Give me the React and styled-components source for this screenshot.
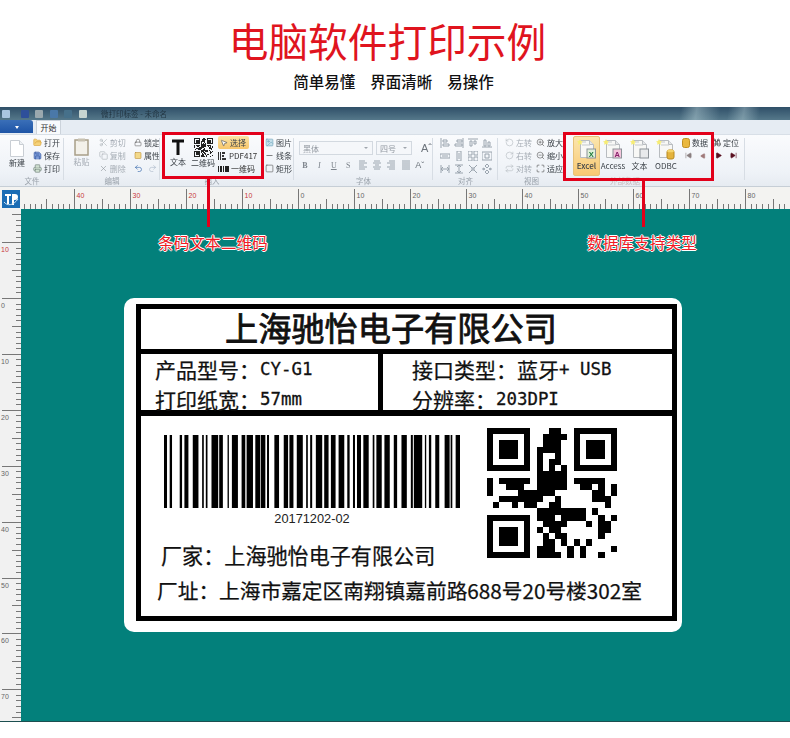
import React from "react";
import styled, { createGlobalStyle } from "styled-components";
import { Scissors, Copy, X, Undo2, Redo2, ZoomIn, ZoomOut, Maximize, Lock, FolderOpen, Save, Printer, Image, Minus, Square, RotateCcw, RotateCw, Repeat, MousePointer2, Binoculars, SkipBack, SkipForward, Play } from "lucide-react";

const CJK = `"Noto Sans CJK SC", "Liberation Sans", sans-serif`;

const GlobalStyle = createGlobalStyle`
  html, body { margin: 0; padding: 0; background: #fff; }
  body { width: 790px; height: 738px; overflow: hidden; font-family: ${CJK}; }
`;

const Page = styled.div`
  width: 790px;
  height: 738px;
  display: flex;
  flex-direction: column;
`;

const Heading = styled.header`
  height: 107px;
  box-sizing: border-box;
  padding-top: 16px;
  text-align: center;
`;

const Title = styled.h1`
  margin: 0;
  padding-right: 15px;
  font-size: 39.7px;
  line-height: 48px;
  font-weight: 400;
  color: #e0141e;
`;

const Subtitle = styled.div`
  margin-top: 6px;
  padding-right: 3px;
  display: flex;
  justify-content: center;
  gap: 15px;
  font-size: 15.5px;
  line-height: 22px;
  font-weight: 500;
  color: #111;
`;

const Window = styled.section`
  position: relative;
  height: 614px;
  display: flex;
  flex-direction: column;
  border-bottom: 1px solid #1c4f50;
`;

const TitleBar = styled.div`
  height: 13px;
  flex: none;
  display: flex;
  align-items: center;
  gap: 6.5px;
  padding-left: 2px;
  filter: blur(0.4px);
  background:
    linear-gradient(100deg, transparent 86%, rgba(190, 215, 220, 0.45) 88%, transparent 91%, transparent 92%, rgba(190, 215, 220, 0.4) 94%, transparent 96%),
    linear-gradient(180deg, #2f4f68, #55788a);
`;

const TitleText = styled.span`
  margin-left: 8px;
  font-size: 7.5px;
  line-height: 13px;
  color: #16242e;
  opacity: 0.75;
`;

const TitleGlyph = styled.i`
  width: 8px;
  height: 8px;
  flex: none;
  border-radius: 1px;
  margin-right: ${(p) => p.$after || 0}px;
  background: ${(p) => p.$c};
`;

const TabRow = styled.div`
  height: 14px;
  flex: none;
  display: flex;
  background: #e6ecf3;
`;

const FileButton = styled.div`
  width: 33px;
  height: 13px;
  display: flex;
  align-items: center;
  justify-content: center;
  background: linear-gradient(180deg, #3a6fb8, #1e54a6);
  border-radius: 0 3px 0 0;
  &::after {
    content: "";
    border: 2.5px solid transparent;
    border-top: 3px solid #fff;
    margin-top: 3px;
  }
`;

const Tab = styled.div`
  margin-left: 3px;
  width: 25px;
  height: 14px;
  background: #f8fafc;
  border: 1px solid #ccd3db;
  border-bottom: none;
  box-sizing: border-box;
  font-size: 8px;
  line-height: 13px;
  text-align: center;
  color: #333;
`;

const Ribbon = styled.div`
  height: 53px;
  flex: none;
  display: flex;
  box-sizing: border-box;
  border-top: 1px solid #d8dfe7;
  border-bottom: 1px solid #c6ced6;
  filter: blur(0.3px);
  background: linear-gradient(180deg, #fafbfd, #eef2f7 75%, #e6ebf1);
`;

const Group = styled.div`
  width: ${(p) => p.$w}px;
  flex: none;
  box-sizing: border-box;
  display: flex;
  flex-direction: column;
  position: relative;
  &::after {
    content: "";
    position: absolute;
    right: 0;
    top: 3px;
    bottom: 6px;
    width: 1px;
    background: ${(p) => (p.$plain ? "transparent" : "#d7dde4")};
  }
`;

const GroupBody = styled.div`
  height: 41px;
  display: flex;
  padding: 1px 0 0 ${(p) => p.$pad || 0}px;
  gap: ${(p) => p.$gap || 0}px;
`;

const GroupCaption = styled.div`
  font-size: 7.5px;
  line-height: 10px;
  text-align: center;
  color: #9aa2ab;
`;

const Stack = styled.div`
  display: flex;
  flex-direction: column;
  width: ${(p) => p.$w}px;
  margin-left: ${(p) => p.$left || 0}px;
`;

const Item = styled.div`
  height: 13px;
  display: flex;
  align-items: center;
  gap: 2px;
  font-size: 8px;
  white-space: nowrap;
  color: ${(p) => (p.$off ? "#a6adb5" : "#3c4248")};
`;

const StrongItem = styled(Item)`
  color: #333;
`;

const Selected = styled(Item)`
  width: 31px;
  height: 13px;
  padding-left: 2px;
  box-sizing: border-box;
  border-radius: 2px;
  background: linear-gradient(180deg, #fbe3a4, #f7c66b);
`;

const BigButton = styled.div`
  width: ${(p) => p.$w}px;
  height: 40px;
  box-sizing: border-box;
  padding-top: ${(p) => p.$top ?? 4}px;
  display: flex;
  flex-direction: column;
  align-items: center;
  font-size: 8px;
  line-height: 11px;
  white-space: nowrap;
  color: ${(p) => (p.$off ? "#a6adb5" : "#3c4248")};
  border-radius: 2px;
  ${(p) => p.$active && "background: linear-gradient(180deg, #fbe6ae, #f8c873); border: 1px solid #e6c27a; font-weight: 500;"}
`;

const FontColumn = styled.div`
  display: flex;
  flex-direction: column;
  gap: 3px;
  padding: 5px 0 0 6px;
`;

const FontRow = styled.div`
  display: flex;
  align-items: center;
  gap: ${(p) => p.$gap || 3}px;
  height: 14px;
`;

const SelectBox = styled.div`
  width: ${(p) => p.$w}px;
  height: 14px;
  box-sizing: border-box;
  display: flex;
  align-items: center;
  justify-content: space-between;
  padding: 0 4px 0 3px;
  background: #f5f7fa;
  border: 1px solid #d3d9e0;
  font-size: 8px;
  color: #9298a0;
  &::after {
    content: "";
    border: 2px solid transparent;
    border-top: 2px solid #a0a6ad;
    margin-top: 2px;
  }
`;

const FontGlyph = styled.span`
  width: 10px;
  text-align: center;
  font: ${(p) => (p.$bold ? "700" : "400")} 8px "Liberation Serif", serif;
  font-style: ${(p) => (p.$italic ? "italic" : "normal")};
  text-decoration: ${(p) => (p.$line ? "underline" : "none")};
  color: #7c838b;
`;

const GrowGlyph = styled.span`
  margin-left: ${(p) => p.$left}px;
  font: 400 ${(p) => p.$size}px "Liberation Sans", sans-serif;
  color: #6c737b;
`;

const AlignIcon = styled.svg`
  display: block;
  width: 10px;
  height: 10px;
  flex: none;
`;

const AlignGrid = styled.div`
  display: grid;
  grid-template-columns: repeat(4, 10px);
  grid-auto-rows: 13px;
  column-gap: 4px;
  padding: 0 0 0 7px;
  align-items: center;
  justify-items: center;
`;

const NavRow = styled.div`
  display: flex;
  align-items: center;
  gap: 8px;
  height: 13px;
  padding-left: 3px;
`;

const Rulers = styled.div`
  flex: 1;
  min-height: 0;
  display: grid;
  grid-template-columns: 21px 1fr;
  grid-template-rows: 22px 1fr;
`;

const RulerCorner = styled.div`
  background: #f3f3f1;
  padding: 3px 0 0 2px;
`;

const LogoBox = styled.div`
  width: 18px;
  height: 18px;
  background: #1b6db5;
  display: flex;
  align-items: center;
  justify-content: center;
`;

const HorizontalRuler = styled.svg`
  display: block;
  width: 769px;
  height: 22px;
  background: #f3f3f1;
`;

const VerticalRuler = styled.svg`
  display: block;
  width: 21px;
  height: 512px;
  background: #f1f1f1;
`;

const Canvas = styled.div`
  background: #03807b;
  padding: 89px 0 0 103px;
`;

const Card = styled.div`
  width: 558px;
  height: 334px;
  box-sizing: border-box;
  padding: 6px 5px 11px 12px;
  background: #fff;
  border-radius: 10px;
`;

const Frame = styled.div`
  height: 100%;
  box-sizing: border-box;
  border: 5px solid #000;
  display: flex;
  flex-direction: column;
  color: #111;
`;

const CompanyRow = styled.div`
  height: 40px;
  flex: none;
  padding-left: 84px;
  font-size: 33.2px;
  line-height: 35px;
  font-weight: 400;
  -webkit-text-stroke: 0.8px #111;
  white-space: nowrap;
  border-bottom: 5px solid #000;
`;

const SpecRow = styled.div`
  height: 56px;
  flex: none;
  display: flex;
  border-bottom: 6px solid #000;
`;

const SpecCell = styled.div`
  width: ${(p) => p.$w}px;
  flex: none;
  box-sizing: border-box;
  padding-left: ${(p) => p.$pad}px;
  ${(p) => p.$divider && "border-right: 5px solid #000;"}
`;

const SpecLine = styled.div`
  height: 30px;
  display: flex;
  align-items: center;
  font-size: 21px;
  font-weight: 400;
  -webkit-text-stroke: 0.25px #111;
  white-space: pre;
`;

const Mono = styled.span`
  font-family: "DejaVu Sans Mono", "Liberation Mono", monospace;
  font-size: 17.4px;
  -webkit-text-stroke: 0.3px #111;
`;

const LowerPart = styled.div`
  flex: 1;
  display: flex;
  flex-direction: column;
`;

const CodesRow = styled.div`
  display: flex;
`;

const BarcodeColumn = styled.div`
  width: 346px;
  flex: none;
  padding: 19px 0 0 23px;
  box-sizing: border-box;
`;

const BarcodeGraphic = styled.svg`
  display: block;
  width: 296px;
  height: 73px;
`;

const BarcodeNumber = styled.div`
  width: 296px;
  margin-top: 4px;
  font: 12.8px/14px "Liberation Sans", sans-serif;
  text-align: center;
  color: #222;
`;

const FactoryName = styled.div`
  margin: 14px 0 0 -3px;
  font-size: 21.1px;
  line-height: 30px;
  font-weight: 400;
  -webkit-text-stroke: 0.25px #111;
  white-space: nowrap;
`;

const FactoryAddress = styled.div`
  margin-top: 5px;
  padding-left: 16px;
  font-size: 20.7px;
  line-height: 30px;
  font-weight: 400;
  -webkit-text-stroke: 0.25px #111;
  white-space: nowrap;
`;

const QrCode = styled.svg`
  display: block;
  width: ${(p) => p.$size}px;
  height: ${(p) => p.$size}px;
  flex: none;
  margin-top: ${(p) => p.$top || 0}px;
`;

const CalloutBox = styled.div`
  position: absolute;
  left: ${(p) => p.$x}px;
  top: ${(p) => p.$y}px;
  width: ${(p) => p.$w}px;
  height: ${(p) => p.$h}px;
  box-sizing: border-box;
  border: 3px solid #e2001a;
`;

const CalloutStem = styled.div`
  position: absolute;
  left: ${(p) => p.$x}px;
  top: ${(p) => p.$y}px;
  width: 3px;
  height: ${(p) => p.$h}px;
  background: #e2001a;
`;

const CalloutLabel = styled.div`
  position: absolute;
  left: ${(p) => p.$x}px;
  top: 125px;
  font-size: 15.7px;
  line-height: 22px;
  white-space: nowrap;
  color: #ee1c25;
  text-shadow: 1px 0 0 #fff, -1px 0 0 #fff, 0 1px 0 #fff, 0 -1px 0 #fff;
`;

const QR_ROWS = [
  "111111100011001111111",
  "100000100111101000001",
  "101110100111001011101",
  "101110101111001011101",
  "101110101001001011101",
  "100000101011001000001",
  "111111101010101111111",
  "000000001111100000000",
  "101111101111101111100",
  "100111001111100110101",
  "100001111110000001101",
  "001111111001000001110",
  "010010110011000000010",
  "000000001111111101000",
  "111111101110111100101",
  "100000100111100010110",
  "101110101011000000110",
  "101110100101100000100",
  "101110100110101010000",
  "100000101110010100001",
  "111111101111010100100",
];

const qrPath = QR_ROWS.map((row, y) =>
  row.split("").map((c, x) => (c === "1" ? `M${x} ${y}h1v1h-1z` : "")).join("")
).join("");

// bar edges read off the label, in 1/3 px from the left of the crop
const BARS = [
  [133, 142], [150, 157], [180, 187], [194, 206], [219, 236], [247, 252], [258, 263], [275, 295],
  [298, 309], [323, 327], [336, 354], [365, 376], [380, 399], [406, 420], [422, 436], [441, 447],
  [463, 477], [491, 504], [508, 520], [530, 548], [558, 563], [570, 576], [587, 606], [612, 625],
  [632, 646], [655, 672], [681, 688], [698, 704], [710, 722], [729, 745], [757, 762], [768, 784],
  [792, 808], [820, 830], [843, 859], [871, 877], [880, 905], [913, 917], [925, 932], [944, 956],
  [972, 987], [990, 995], [1005, 1018],
];

// little alignment pictures, four to a row
const ALIGN_PATHS = [
  "M1 0v10M3 2h4v2H3zM3 6h6v2H3z",
  "M9 0v10M3 2h5v2H3zM1 6h7v2H1z",
  "M0 1h10M2 3h2v5H2zM6 3h2v3H6z",
  "M0 9h10M2 2h2v6H2zM6 4h2v4H6z",
  "M0 3h10v4H0zM2 5h6",
  "M3 0h4v10H3zM5 2v6",
  "M0 0h4v4H0zM6 0h4v4H6zM0 6h4v4H0zM6 6h4v4H6z",
  "M0 1h10v8H0zM3 3h4v4H3z",
  "M1 1v8M9 1v8M1 5h8M3 3l-2 2 2 2M7 3l2 2-2 2",
  "M1 1h8M1 9h8M5 1v8M3 3l2-2 2 2M3 7l2 2 2-2",
  "M1 1l3 3M9 1L6 4M1 9l3-3M9 9L6 6M4 4h2v2H4z",
  "M5 0l2 2-2 2-2-2zM5 6l2 2-2 2-2-2zM1 4l2 1-2 1zM9 4L7 5l2 1z",
];

const TEXT_ALIGN_PATHS = [
  "M1 1h6M1 3h8M1 5h5M1 7h8M1 9h6",
  "M2 1h6M1 3h8M3 5h4M1 7h8M2 9h6",
  "M3 1h6M1 3h8M4 5h5M1 7h8M3 9h6",
  "M1 1h8M1 3h8M1 5h8M1 7h8M1 9h8",
];

const UNIT = 5.59;
const ORIGIN = 298;

const TopRuler = () => {
  const ticks = [];
  for (let k = -49; k <= 88; k++) {
    const x = Math.round(ORIGIN + k * UNIT - 21) + 0.5;
    const from = k % 10 === 0 ? 2 : k % 5 === 0 ? 12 : 17;
    ticks.push(<line key={k} x1={x} x2={x} y1={from} y2={22} stroke="#777" />);
    if (k % 10 === 0) {
      ticks.push(
        <text key={`t${k}`} x={x + 2} y={11} fontSize="7" fontFamily="Liberation Sans" fill={k < 0 ? "#c8383c" : "#666"}>
          {Math.abs(k)}
        </text>
      );
    }
  }
  return <HorizontalRuler viewBox="0 0 769 22">{ticks}</HorizontalRuler>;
};

const LeftRuler = () => {
  const ticks = [];
  for (let k = -15; k <= 76; k++) {
    const y = Math.round(ORIGIN + k * UNIT - 209) + 0.5;
    const from = k % 10 === 0 ? 2 : k % 5 === 0 ? 12 : 16;
    ticks.push(<line key={k} x1={from} x2={21} y1={y} y2={y} stroke="#777" />);
    if (k % 10 === 0) {
      ticks.push(
        <text key={`t${k}`} x={1} y={y + 9} fontSize="7" fontFamily="Liberation Sans" fill={k < 0 ? "#c8383c" : "#666"}>
          {Math.abs(k)}
        </text>
      );
    }
  }
  return <VerticalRuler viewBox="0 0 21 512">{ticks}</VerticalRuler>;
};

const PageIcon = ({ w = 14, h = 17, stroke = "#c9ced4", fill = "#fff" }) => (
  <svg width={w} height={h} viewBox="0 0 14 17">
    <path d="M.5.5h9l4 4v12H.5z" fill={fill} stroke={stroke} />
    <path d="M9.500.5v4h4" fill="#eef1f4" stroke={stroke} />
  </svg>
);

const DataIcon = ({ badge, letter, mark }) => (
  <svg width="20" height="21" viewBox="0 0 20 21">
    <path d="M3.500 1.500h9l4 4v13h-13z" fill="#f8f8f6" stroke="#b8bcc0" />
    <path d="M12.500 1.500v4h4" fill="#e4e6e8" stroke="#b8bcc0" />
    <path d="M5 3h4M5 6h8" stroke="#c5c9cc" />
    <path d="M3 0l1 2 2 .4-1.500 1.400.4 2L3 5l-1.900.8.4-2L0 2.400 2 2z" fill="#f6ec74" />
    {badge === "db" ? (
      <g>
        <rect x="11" y="11" width="7" height="9" rx="2" fill="#e4b33c" stroke="#b88a20" />
        <ellipse cx="14.500" cy="12" rx="3.500" ry="1.300" fill="#f4d46c" />
      </g>
    ) : (
      <g>
        <rect x="10" y="10" width="8.500" height="9" fill={badge} stroke="#8c9298" />
        {mark && (
          <text x="14.200" y="17.500" textAnchor="middle" fontSize="7.500" fontWeight="700" fontFamily="Liberation Sans" fill={letter}>
            {mark}
          </text>
        )}
      </g>
    )}
  </svg>
);

const LineIcon = ({ d, color = "#9aa4ae" }) => (
  <AlignIcon viewBox="0 0 10 10">
    <path d={d} fill="none" stroke={color} strokeWidth="1" />
  </AlignIcon>
);

const tiny = { size: 9, strokeWidth: 1.6 };

const App = () => (
  <Page>
    <GlobalStyle />
    <Heading>
      <Title>电脑软件打印示例</Title>
      <Subtitle>
        <span>简单易懂</span>
        <span>界面清晰</span>
        <span>易操作</span>
      </Subtitle>
    </Heading>

    <Window>
      <TitleBar>
        <TitleGlyph $c="#a9c6e0" $after={4} />
        <TitleGlyph $c="#2e4f9a" />
        <TitleGlyph $c="#9aa8ae" />
        <TitleGlyph $c="#4a78a8" />
        <TitleGlyph $c="#46708a" />
        <TitleGlyph $c="#c6d4d0" />
        <TitleText>微打印标签 - 未命名</TitleText>
      </TitleBar>
      <TabRow>
        <FileButton />
        <Tab>开始</Tab>
      </TabRow>
      <Ribbon>
        <Group $w={64}>
          <GroupBody $pad={7}>
            <BigButton $w={20}>
              <PageIcon />
              新建
            </BigButton>
            <Stack $w={30} $left={6}>
              <Item><FolderOpen {...tiny} color="#d9a032" fill="#f5d27a" />打开</Item>
              <Item><Save {...tiny} color="#2e4f9a" fill="#7d9cd8" />保存</Item>
              <Item><Printer {...tiny} color="#6a7a74" fill="#cfe0d0" />打印</Item>
            </Stack>
          </GroupBody>
          <GroupCaption>文件</GroupCaption>
        </Group>

        <Group $w={96}>
          <GroupBody $pad={8} $gap={8}>
            <BigButton $w={20} $off $top={2}>
              <svg width="15" height="18" viewBox="0 0 15 18">
                <rect x="1" y="2" width="13" height="15" fill="#f3f1ea" stroke="#a89e88" strokeWidth="1.500" />
                <rect x="4" y="0.500" width="7" height="3" fill="#c8c2b2" />
              </svg>
              粘贴
            </BigButton>
            <Stack $w={29}>
              <Item $off><Scissors {...tiny} color="#aab0b6" />剪切</Item>
              <Item $off><Copy {...tiny} color="#aab0b6" />复制</Item>
              <Item $off><X {...tiny} color="#8d949b" />删除</Item>
            </Stack>
            <Stack $w={26}>
              <Item><Lock {...tiny} color="#555" />锁定</Item>
              <Item><Square {...tiny} color="#b8862a" fill="#f3d98a" />属性</Item>
              <Item>
                <Undo2 {...tiny} color="#2c5fa8" />
                <Redo2 {...tiny} color="#a9b7c8" style={{ marginLeft: 3 }} />
              </Item>
            </Stack>
          </GroupBody>
          <GroupCaption>编辑</GroupCaption>
        </Group>

        <Group $w={134}>
          <GroupBody $pad={8} $gap={2}>
            <BigButton $w={20} $top={2}>
              <svg width="14" height="18" viewBox="0 0 14 18">
                <path d="M1 1.500h12v3H8.500V17h-3V4.500H1z" fill="#111" />
              </svg>
              文本
            </BigButton>
            <BigButton $w={26} $top={2}>
              <QrCode $size={19} viewBox="0 0 21 21" shapeRendering="crispEdges"><path d={qrPath} fill="#222" /></QrCode>
              二维码
            </BigButton>
            <Stack $w={44}>
              <Selected><MousePointer2 size={8} color="#555" fill="#fff" />选择</Selected>
              <StrongItem>
                <svg width="9" height="8" viewBox="0 0 9 8"><path d="M0 0h1v8H0zM2 0h1v8H2zM4 0h3v2H4zM4 3h2v2H4zM4 6h4v2H4z" fill="#333" /></svg>
                PDF417
              </StrongItem>
              <StrongItem>
                <svg width="11" height="6" viewBox="0 0 11 6"><path d="M0 0h1v6H0zM2 0h2v6H2zM5 0h1v6H5zM7 0h4v6H7z" fill="#222" /></svg>
                一维码
              </StrongItem>
            </Stack>
            <Stack $w={28} $left={1}>
              <Item><Image {...tiny} color="#6aa0b8" fill="#c6e0ea" />图片</Item>
              <Item><Minus {...tiny} color="#333" />线条</Item>
              <Item><Square {...tiny} color="#555" />矩形</Item>
            </Stack>
          </GroupBody>
          <GroupCaption style={{ paddingRight: 30 }}>插入</GroupCaption>
        </Group>

        <Group $w={139}>
          <GroupBody>
            <FontColumn>
              <FontRow style={{ marginLeft: -1 }}>
                <SelectBox $w={74}>黑体</SelectBox>
                <SelectBox $w={36}>四号</SelectBox>
                <GrowGlyph $left={6} $size={11}>Aˆ</GrowGlyph>
              </FontRow>
              <FontRow $gap={4.400}>
                <FontGlyph $bold>B</FontGlyph>
                <FontGlyph $italic>I</FontGlyph>
                <FontGlyph $line>U</FontGlyph>
                <FontGlyph>S</FontGlyph>
                {TEXT_ALIGN_PATHS.map((d) => <LineIcon key={d} d={d} />)}
                <GrowGlyph $left={0} $size={9}>Aˇ</GrowGlyph>
              </FontRow>
            </FontColumn>
          </GroupBody>
          <GroupCaption>字体</GroupCaption>
        </Group>

        <Group $w={65}>
          <GroupBody>
            <AlignGrid>
              {ALIGN_PATHS.map((d) => <LineIcon key={d} d={d} />)}
            </AlignGrid>
          </GroupBody>
          <GroupCaption>对齐</GroupCaption>
        </Group>

        <Group $w={67} $plain>
          <GroupBody $pad={7} $gap={2}>
            <Stack $w={29}>
              <Item $off><RotateCcw {...tiny} color="#b4bac0" />左转</Item>
              <Item $off><RotateCw {...tiny} color="#b4bac0" />右转</Item>
              <Item $off><Repeat {...tiny} color="#b4bac0" />对转</Item>
            </Stack>
            <Stack $w={27}>
              <Item><ZoomIn {...tiny} color="#555" />放大</Item>
              <Item><ZoomOut {...tiny} color="#555" />缩小</Item>
              <Item><Maximize {...tiny} color="#444" />适应</Item>
            </Stack>
          </GroupBody>
          <GroupCaption>视图</GroupCaption>
        </Group>

        <Group $w={180}>
          <GroupBody $pad={8}>
            <BigButton $w={27} $active $top={2}>
              <DataIcon badge="#dff0d8" letter="#1f7a3a" mark="X" />
              Excel
            </BigButton>
            <BigButton $w={26} $top={3}>
              <DataIcon badge="#f3c6dc" letter="#8a1f6a" mark="A" />
              Access
            </BigButton>
            <BigButton $w={27} $top={3}>
              <DataIcon badge="#e8eaec" />
              文本
            </BigButton>
            <BigButton $w={26} $top={3}>
              <DataIcon badge="db" />
              ODBC
            </BigButton>
            <Stack $w={30} $left={3}>
              <Item>
                <svg width="8" height="10" viewBox="0 0 8 10"><rect x="0.500" y="0.500" width="7" height="9" rx="2" fill="#eab83e" stroke="#c08f22" /></svg>
                数据
              </Item>
              <NavRow>
                <SkipBack size={7} color="#8a7f80" fill="#8a7f80" />
                <Play size={6} color="#a07a7a" fill="#a07a7a" style={{ transform: "scaleX(-1)" }} />
              </NavRow>
            </Stack>
            <Stack $w={30}>
              <Item><Binoculars {...tiny} color="#222" />定位</Item>
              <NavRow>
                <Play size={7} color="#5a1020" fill="#5a1020" />
                <SkipForward size={7} color="#5a1020" fill="#5a1020" />
              </NavRow>
            </Stack>
          </GroupBody>
          <GroupCaption style={{ paddingRight: 60, color: "#c9b9bb" }}>外部数据</GroupCaption>
        </Group>
      </Ribbon>

      <Rulers>
        <RulerCorner>
          <LogoBox>
            <svg width="16" height="15" viewBox="0 0 16 15">
              <path d="M2 2h6v2H6v8H4V4H2zM9 2h3a3 3 0 0 1 0 6h-1v5H9z" fill="#fff" />
              <path d="M1 10c3 4 9 4 14-3" fill="none" stroke="#cfe4f5" strokeWidth="1" />
            </svg>
          </LogoBox>
        </RulerCorner>
        <TopRuler />
        <LeftRuler />
        <Canvas>
          <Card>
            <Frame>
              <CompanyRow>上海驰怡电子有限公司</CompanyRow>
              <SpecRow>
                <SpecCell $w={242} $pad={14} $divider>
                  <SpecLine>产品型号：<Mono>CY-G1</Mono></SpecLine>
                  <SpecLine>打印纸宽：<Mono>57mm</Mono></SpecLine>
                </SpecCell>
                <SpecCell $w={289} $pad={29}>
                  <SpecLine>接口类型：蓝牙<Mono>+ USB</Mono></SpecLine>
                  <SpecLine>分辨率：<Mono>203DPI</Mono></SpecLine>
                </SpecCell>
              </SpecRow>
              <LowerPart>
                <CodesRow>
                  <BarcodeColumn>
                    <BarcodeGraphic viewBox="133 0 885 73" preserveAspectRatio="none">
                      {BARS.map(([a, b]) => <rect key={a} x={a} y={0} width={b - a} height={73} fill="#000" />)}
                    </BarcodeGraphic>
                    <BarcodeNumber>20171202-02</BarcodeNumber>
                    <FactoryName>厂家：上海驰怡电子有限公司</FactoryName>
                  </BarcodeColumn>
                  <QrCode $size={130} $top={12} viewBox="0 0 21 21" shapeRendering="crispEdges">
                    <path d={qrPath} fill="#000" />
                  </QrCode>
                </CodesRow>
                <FactoryAddress>厂址：上海市嘉定区南翔镇嘉前路688号20号楼302室</FactoryAddress>
              </LowerPart>
            </Frame>
          </Card>
        </Canvas>
      </Rulers>

      <CalloutBox $x={162} $y={25} $w={102} $h={47} />
      <CalloutStem $x={207} $y={72} $h={48} />
      <CalloutLabel $x={158}>条码文本二维码</CalloutLabel>
      <CalloutBox $x={563} $y={25} $w={151} $h={49} />
      <CalloutStem $x={642} $y={74} $h={46} />
      <CalloutLabel $x={587}>数据库支持类型</CalloutLabel>
    </Window>
  </Page>
);

export default App;
